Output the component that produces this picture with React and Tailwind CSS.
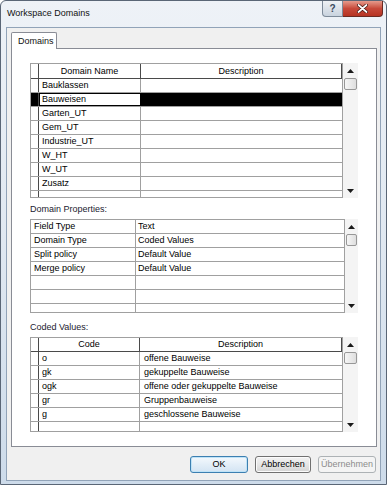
import React from 'react';

const ArrowUp = () => (
    <svg width="7" height="4" viewBox="0 0 7 4"><path d="M0 4 L3.5 0 L7 4 Z" fill="#1a1a1a" /></svg>
);
const ArrowDown = () => (
    <svg width="7" height="4" viewBox="0 0 7 4"><path d="M0 0 L3.5 4 L7 0 Z" fill="#1a1a1a" /></svg>
);

const ScrollBar = ({ width }) => (
    <div className={`${width} h-full flex flex-col bg-[#f4f4f4]`}>
        <div className="h-[15px] flex items-center justify-center">
            <ArrowUp />
        </div>
        <div className="h-[12px] mx-[1px] rounded-[2px] border border-[#979797] bg-gradient-to-r from-[#f6f6f6] to-[#dedede]" />
        <div className="flex-1" />
        <div className="h-[15px] flex items-center justify-center">
            <ArrowDown />
        </div>
    </div>
);

const Cell = ({ className = '', children }) => (
    <div className={`h-full flex items-center border-r border-[#a0a0a0] overflow-hidden whitespace-nowrap ${className}`}>
        {children}
    </div>
);

const domains = ['Bauklassen', 'Bauweisen', 'Garten_UT', 'Gem_UT', 'Industrie_UT', 'W_HT', 'W_UT', 'Zusatz'];

const props = [
    ['Field Type', 'Text'],
    ['Domain Type', 'Coded Values'],
    ['Split policy', 'Default Value'],
    ['Merge policy', 'Default Value'],
    ['', ''],
    ['', ''],
];

const codes = [
    ['o', 'offene Bauweise'],
    ['gk', 'gekuppelte Bauweise'],
    ['ogk', 'offene oder gekuppelte Bauweise'],
    ['gr', 'Gruppenbauweise'],
    ['g', 'geschlossene Bauweise'],
];

const App = () => {
    return (
        <div className="w-[391px] h-[488px] bg-white font-['Liberation_Sans',Arial,sans-serif] text-[9px] text-black leading-[11px]">
            <div className="w-[387px] h-[485px] rounded-t-[6px] border border-[#5a6676] bg-gradient-to-b from-[#eef2f7] via-[#e0e8f1] to-[#cddbea] flex flex-col">
                {/* title bar */}
                <div className="h-[26px] flex justify-between pl-[6px] pr-[3px]">
                    <div className="pt-[7px] text-[9px] text-[#111]">Workspace Domains</div>
                    <div className="flex h-[16px]">
                        <div className="w-[21px] h-full rounded-bl-[4px] border border-t-0 border-[#7d8a99] bg-gradient-to-b from-[#eef1f5] to-[#c9d3de] flex items-center justify-center text-[10px] font-bold text-[#3a4a5e]">
                            ?
                        </div>
                        <div className="w-[40px] h-full rounded-br-[4px] border border-t-0 border-l-0 border-[#6b2a22] bg-gradient-to-b from-[#e59a8c] via-[#c7493a] to-[#b63322] flex items-center justify-center">
                            <svg width="11" height="9" viewBox="0 0 11 9">
                                <path d="M1.5 1 L9.5 8 M9.5 1 L1.5 8" stroke="#3b0f0a" strokeWidth="3.2" strokeLinecap="round" />
                                <path d="M1.5 1 L9.5 8 M9.5 1 L1.5 8" stroke="#ffffff" strokeWidth="1.8" strokeLinecap="round" />
                            </svg>
                        </div>
                    </div>
                </div>

                {/* client area */}
                <div className="mx-[5px] h-[454px] border border-[#91a3b8] bg-[#f0f0f0] flex flex-col pl-[4px] pr-[3px] pt-[4px]">
                    {/* tab */}
                    <div className="flex">
                        <div className="relative z-10 -mb-px w-[46px] h-[17px] border border-b-0 border-[#898c95] bg-white rounded-t-[2px] flex items-center pl-[6px] text-[#111]">
                            Domains
                        </div>
                    </div>
                    <div className="w-[366px] h-[399px] border border-[#898c95] bg-white pl-[18px] pt-[14px] flex flex-col">
                        {/* Domains grid */}
                        <div className="flex h-[135px]">
                            <div className="w-[313px] h-full border border-[#a0a0a0] flex flex-col">
                                <div className="h-[15px] flex border-b border-[#4a4a4a]">
                                    <Cell className="w-[8px] border-r-[#4a4a4a]" />
                                    <Cell className="w-[102px] justify-center border-r-[#4a4a4a]">Domain Name</Cell>
                                    <Cell className="flex-1 justify-center border-r-[#4a4a4a]">Description</Cell>
                                </div>
                                {domains.map((d, i) => (
                                    <div key={d} className="h-[14px] flex border-b border-[#a0a0a0]">
                                        <Cell className={`w-[8px] border-r-[#4a4a4a] ${i === 1 ? 'bg-black' : ''}`} />
                                        <Cell className={`w-[102px] pl-[3px] ${i === 1 ? 'outline outline-1 -outline-offset-1 outline-black' : ''}`}>{d}</Cell>
                                        <Cell className={`flex-1 border-r-0 ${i === 1 ? 'bg-black' : ''}`} />
                                    </div>
                                ))}
                                <div className="flex-1 flex">
                                    <Cell className="w-[8px] border-r-[#4a4a4a]" />
                                    <Cell className="w-[102px]" />
                                </div>
                            </div>
                            <ScrollBar width="w-[15px]" />
                        </div>

                        <div className="h-[21px] pt-[6px] text-[#1b2130]">Domain Properties:</div>

                        {/* Properties grid */}
                        <div className="flex h-[94px]">
                            <div className="w-[315px] h-full border border-[#a0a0a0] flex flex-col">
                                {props.map(([k, v], i) => (
                                    <div key={i} className="h-[14px] flex border-b border-[#a0a0a0]">
                                        <Cell className="w-[105px] pl-[3px]">{k}</Cell>
                                        <Cell className="flex-1 pl-[2px] border-r-0">{v}</Cell>
                                    </div>
                                ))}
                                <div className="flex-1 flex">
                                    <Cell className="w-[105px]" />
                                </div>
                            </div>
                            <ScrollBar width="w-[13px]" />
                        </div>

                        <div className="h-[24px] pt-[9px] text-[#1b2130]">Coded Values:</div>

                        {/* Coded values grid */}
                        <div className="flex h-[95px]">
                            <div className="w-[313px] h-full border border-[#a0a0a0] flex flex-col">
                                <div className="h-[14px] flex border-b border-[#4a4a4a]">
                                    <Cell className="w-[8px] border-r-[#4a4a4a]" />
                                    <Cell className="w-[101px] justify-center border-r-[#4a4a4a]">Code</Cell>
                                    <Cell className="flex-1 justify-center border-r-[#4a4a4a]">Description</Cell>
                                </div>
                                {codes.map(([c, d]) => (
                                    <div key={c} className="h-[14px] flex border-b border-[#a0a0a0]">
                                        <Cell className="w-[8px] border-r-[#4a4a4a]" />
                                        <Cell className="w-[101px] pl-[3px]">{c}</Cell>
                                        <Cell className="flex-1 pl-[4px] border-r-0">{d}</Cell>
                                    </div>
                                ))}
                                <div className="flex-1 flex">
                                    <Cell className="w-[8px] border-r-[#4a4a4a]" />
                                    <Cell className="w-[101px]" />
                                </div>
                            </div>
                            <ScrollBar width="w-[15px]" />
                        </div>
                    </div>

                    {/* buttons */}
                    <div className="flex justify-end gap-[7px] mt-[9px] pr-[1px]">
                        <button className="w-[58px] h-[17px] rounded-[3px] border border-[#3c7fb1] bg-gradient-to-b from-[#f4f9fd] via-[#e3eef8] to-[#d3e4f3] shadow-[inset_0_0_0_1px_#bfe3f7] text-black">
                            OK
                        </button>
                        <button className="w-[56px] h-[17px] rounded-[3px] border border-[#707070] bg-gradient-to-b from-[#f2f2f2] via-[#e6e6e6] to-[#d4d4d4] shadow-[inset_0_0_0_1px_#fbfbfb] text-black">
                            Abbrechen
                        </button>
                        <button className="w-[58px] h-[17px] rounded-[3px] border border-[#adb2b5] bg-[#f4f4f4] text-[#8c8c8c]">
                            Übernehmen
                        </button>
                    </div>
                </div>
            </div>
        </div>
    );
};

export default App;
